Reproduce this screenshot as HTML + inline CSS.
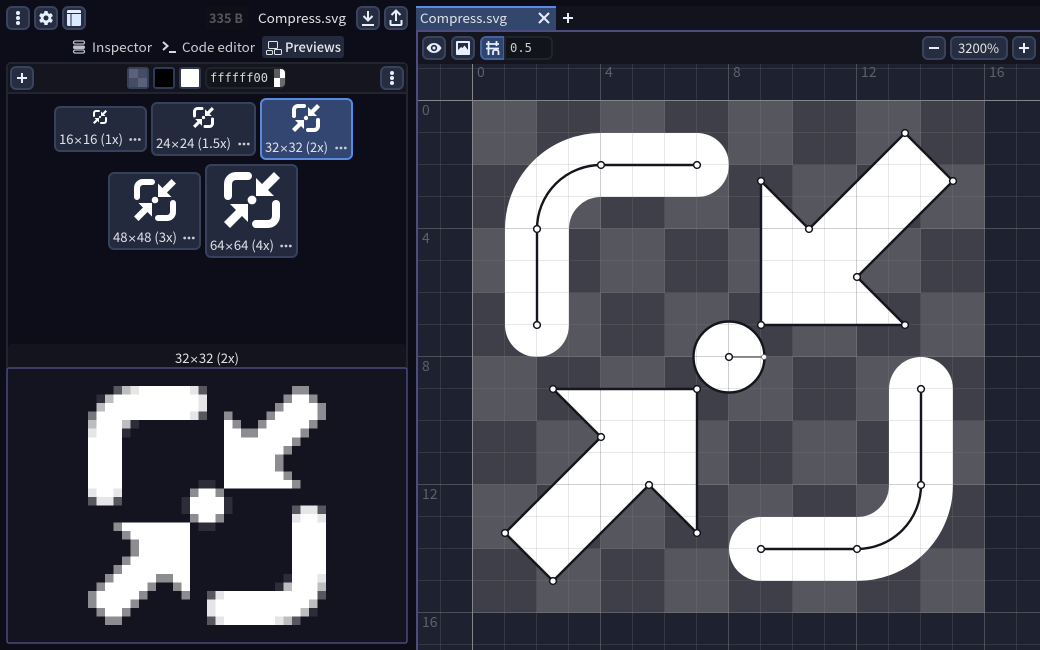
<!DOCTYPE html>
<html>
<head>
<meta charset="utf-8">
<style>
html,body{margin:0;padding:0;background:#0c0d18;width:1040px;height:650px;overflow:hidden}
svg{display:block}
text{font-family:"Noto Sans CJK JP","Liberation Sans",sans-serif;font-size:13px;fill:#dfe1e6}
tspan{font-family:"DejaVu Sans",sans-serif;font-size:11px}
.m{font-family:"DejaVu Sans Mono","Liberation Mono",monospace;font-size:12px}
.r{fill:#5f6068;font-size:14px}
.b{fill:#262d41;stroke:#38435f;stroke-width:2}
.ic{fill:#e6efff}
.is{fill:none;stroke:#e6efff;stroke-width:2}
</style>
</head>
<body>
<svg width="1040" height="650" viewBox="0 0 1040 650" xmlns="http://www.w3.org/2000/svg">
<defs>
<symbol id="cp" viewBox="0 0 16 16">
<path d="M2 7V4a2 2 0 0 1 2-2h3M14 9v3a2 2 0 0 1-2 2H9" fill="none" stroke="#fff" stroke-width="2" stroke-linecap="round"/>
<path d="M9 2.500L10.500 4L13.500 1L15 2.500L12 5.500L13.500 7H9zM7 9v4.500L5.500 12L2.500 15L1 13.500L4 10.500L2.500 9z" fill="#fff"/>
<circle cx="8" cy="8" r="1.100" fill="#fff"/>
</symbol>
<g id="keb"><circle cx="0" cy="-5" r="2" class="ic"/><circle cx="0" cy="0" r="2" class="ic"/><circle cx="0" cy="5" r="2" class="ic"/></g>
<g id="dots"><circle cx="-4.300" cy="0" r="1.400" fill="#c9cbd2"/><circle cx="0" cy="0" r="1.400" fill="#c9cbd2"/><circle cx="4.300" cy="0" r="1.400" fill="#c9cbd2"/></g>
</defs>

<rect width="1040" height="650" fill="#0c0d18"/>

<!-- Left header -->
<rect x="7" y="7" width="22" height="22" rx="5" class="b"/><use href="#keb" x="18" y="18"/>
<rect x="35" y="7" width="22" height="22" rx="5" class="b"/>
<g transform="translate(46 18)" class="ic">
<circle r="5.300"/>
<rect x="-1.800" y="-7" width="3.600" height="14" rx=".8"/>
<rect x="-1.800" y="-7" width="3.600" height="14" rx=".8" transform="rotate(60)"/>
<rect x="-1.800" y="-7" width="3.600" height="14" rx=".8" transform="rotate(120)"/>
<circle r="2.500" fill="#262d41"/>
</g>
<rect x="63" y="7" width="22" height="22" rx="5" class="b"/>
<path d="M67 11.500a1.500 1.500 0 0 1 1.500-1.500h11a1.500 1.500 0 0 1 1.500 1.500V13H67z" fill="#e6efff"/>
<path d="M67 14h3.500v12H68.500a1.500 1.500 0 0 1-1.500-1.500zM71.500 14H81v10.500a1.500 1.500 0 0 1-1.500 1.500h-8z" fill="#dbeaff"/>
<rect x="205" y="6" width="43" height="24" rx="4" fill="#0f1017"/>
<text x="209" y="23" textLength="34" lengthAdjust="spacingAndGlyphs" style="fill:#55565c;font-weight:bold">335 B</text>
<text x="258" y="23" textLength="88" lengthAdjust="spacingAndGlyphs">Compress.svg</text>
<rect x="357" y="7" width="22" height="22" rx="5" class="b"/>
<path d="M368 11v9M363.500 16l4.500 4.500 4.500-4.500M362 25h12" fill="none" stroke="#e6efff" stroke-width="2"/>
<rect x="385" y="7" width="22" height="22" rx="5" class="b"/>
<path d="M396 21v-10M391.500 15l4.500-4.500 4.500 4.500M390.500 20v4a1 1 0 0 0 1 1h9a1 1 0 0 0 1-1v-4" fill="none" stroke="#e6efff" stroke-width="2"/>

<!-- Tabs -->
<g fill="none" stroke="#bcc0c9" stroke-width="1.300"><rect x="73.500" y="41" width="11" height="3" rx="1.500"/><rect x="73.500" y="50" width="11" height="3" rx="1.500"/></g>
<rect x="73" y="45.500" width="12" height="3.500" rx="1.500" fill="#bcc0c9"/>
<text x="92" y="52" textLength="60" lengthAdjust="spacingAndGlyphs" style="fill:#c9cbd0">Inspector</text>
<path d="M163 42l4.500 4-4.500 4" fill="none" stroke="#d5d8de" stroke-width="2"/><rect x="169" y="51" width="7" height="2" fill="#d5d8de"/>
<text x="182" y="52" textLength="73" lengthAdjust="spacingAndGlyphs" style="fill:#c9cbd0">Code editor</text>
<rect x="262" y="36" width="82" height="22" rx="3" fill="#232a3d"/>
<g fill="none" stroke="#dfe3ea" stroke-width="1"><rect x="268.500" y="41.500" width="9" height="7" rx="1"/><rect x="266.500" y="50.500" width="6" height="4" rx="1"/><rect x="274.500" y="49.500" width="7" height="5" rx="1"/></g>
<text x="285" y="52" textLength="56" lengthAdjust="spacingAndGlyphs" style="font-weight:500;fill:#e6e8ec">Previews</text>

<!-- Previews panel -->
<path d="M7 345V67a4 4 0 0 1 4-4h392a4 4 0 0 1 4 4v278" fill="none" stroke="#22242f" stroke-width="2"/>
<path d="M8 93V68a4 4 0 0 1 4-4h390a4 4 0 0 1 4 4v25z" fill="#14151f"/>
<rect x="6" y="92" width="402" height="2" fill="#22242f"/>
<rect x="11" y="67" width="22" height="22" rx="5" class="b"/>
<path d="M22 73v10M17 78h10" stroke="#e6efff" stroke-width="2" fill="none"/>
<rect x="127" y="67" width="22" height="22" rx="3" fill="#36405a"/>
<g fill="#5a6178"><rect x="129" y="69" width="9" height="9"/><rect x="138" y="78" width="9" height="9"/></g>
<g fill="#454d66"><rect x="138" y="69" width="9" height="9"/><rect x="129" y="78" width="9" height="9"/></g>
<rect x="154" y="68" width="20" height="20" rx="2" fill="#000" stroke="#2e3a58" stroke-width="2"/>
<rect x="180" y="68" width="20" height="20" rx="2" fill="#fff" stroke="#2e3a58" stroke-width="2"/>
<rect x="206" y="68" width="79" height="20" rx="5" fill="#12151a" stroke="#1f232c" stroke-width="2"/>
<text x="210" y="82" class="m" textLength="58" lengthAdjust="spacingAndGlyphs" style="fill:#d5d7dc">ffffff00</text>
<path d="M274 69h6v9h-6z" fill="#5a5a5f"/><path d="M280 69h1a4 4 0 0 1 4 4v5h-5z" fill="#fff"/><path d="M274 78h6v9h-6z" fill="#fff"/><path d="M280 78h5v5a4 4 0 0 1-4 4h-1z" fill="#6a6a6f"/>
<rect x="381" y="67" width="22" height="22" rx="5" class="b"/><use href="#keb" x="392" y="78"/>

<!-- Preview tiles -->
<rect x="55" y="107" width="91" height="44" rx="5" fill="#232a3d" stroke="#36415c" stroke-width="2"/>
<use href="#cp" x="92" y="109" width="16" height="16"/>
<text x="59" y="144" textLength="64" lengthAdjust="spacingAndGlyphs">16<tspan>×</tspan>16 (1x)</text><use href="#dots" x="135" y="139.500"/>

<rect x="152" y="103" width="103" height="52" rx="5" fill="#232a3d" stroke="#36415c" stroke-width="2"/>
<use href="#cp" x="191.500" y="105.500" width="24" height="24"/>
<text x="156" y="148" textLength="75" lengthAdjust="spacingAndGlyphs">24<tspan>×</tspan>24 (1.5x)</text><use href="#dots" x="244" y="144"/>

<rect x="261" y="99" width="91" height="60" rx="5" fill="#324671" stroke="#5a8ae0" stroke-width="2"/>
<use href="#cp" x="290" y="102" width="32" height="32"/>
<text x="265" y="152" textLength="63" lengthAdjust="spacingAndGlyphs">32<tspan>×</tspan>32 (2x)</text><use href="#dots" x="341" y="148"/>

<rect x="109" y="173" width="91" height="76" rx="5" fill="#232a3d" stroke="#36415c" stroke-width="2"/>
<use href="#cp" x="131" y="176" width="48" height="48"/>
<text x="113" y="242" textLength="64" lengthAdjust="spacingAndGlyphs">48<tspan>×</tspan>48 (3x)</text><use href="#dots" x="189" y="238"/>

<rect x="206" y="165" width="91" height="92" rx="5" fill="#232a3d" stroke="#36415c" stroke-width="2"/>
<use href="#cp" x="220" y="168" width="64" height="64"/>
<text x="210" y="250" textLength="64" lengthAdjust="spacingAndGlyphs">64<tspan>×</tspan>64 (4x)</text><use href="#dots" x="286" y="246"/>

<!-- Large preview -->
<path d="M8 368V348a4 4 0 0 1 4-4h390a4 4 0 0 1 4 4v20z" fill="#13141e"/>
<rect x="6" y="345" width="2" height="24" fill="#22242f"/><rect x="406" y="345" width="2" height="24" fill="#22242f"/>
<text x="175" y="363" textLength="64" lengthAdjust="spacingAndGlyphs">32<tspan>×</tspan>32 (2x)</text>
<rect x="7" y="368" width="400" height="275" rx="2" fill="#13141f" stroke="#4b4a7c" stroke-width="1.500"/>
<svg x="71" y="369" width="272" height="273" viewBox="0 0 32 32" preserveAspectRatio="none" shape-rendering="crispEdges">
<g fill="none" stroke-width="1">
<path stroke="#fff" d="M8 2.500h6M5 3.500h10M26 3.500h2M4 4.500h11M25 4.500h4M3 5.500h11M24 5.500h5M3 6.500h3M18 6.500h1M23 6.500h5M3 7.500h3M18 7.500h2M22 7.500h5M2 8.500h4M18 8.500h8M2 9.500h4M18 9.500h7M2 10.500h4M18 10.500h6M2 11.500h4M18 11.500h6M2 12.500h4M18 12.500h7M2 13.500h4M18 13.500h8M3 14.500h2M15 14.500h2M14 15.500h4M14 16.500h4M15 17.500h2M27 17.500h2M6 18.500h8M26 18.500h4M7 19.500h7M26 19.500h4M8 20.500h6M26 20.500h4M8 21.500h6M26 21.500h4M7 22.500h7M26 22.500h4M6 23.500h8M26 23.500h4M5 24.500h5M12 24.500h2M26 24.500h3M4 25.500h5M13 25.500h1M26 25.500h3M3 26.500h5M18 26.500h11M3 27.500h4M17 27.500h11M4 28.500h2M17 28.500h10M18 29.500h6"/>
<path stroke="#8c8c91" d="M26 2.500h2M25 3.500h1M28 3.500h1M24 4.500h1M29 4.500h1M18 5.500h1M23 5.500h1M29 5.500h1M19 6.500h1M22 6.500h1M28 6.500h1M20 7.500h2M27 7.500h1M26 8.500h1M25 9.500h1M24 10.500h1M24 11.500h1M25 12.500h1M26 13.500h1M14 14.500h1M17 14.500h1M14 17.500h1M17 17.500h1M5 18.500h1M6 19.500h1M7 20.500h1M7 21.500h1M6 22.500h1M5 23.500h1M4 24.500h1M10 24.500h2M3 25.500h1M9 25.500h1M12 25.500h1M2 26.500h1M8 26.500h1M13 26.500h1M2 27.500h1M7 27.500h1M3 28.500h1M6 28.500h1M4 29.500h2"/>
<path stroke="#e6e6e8" d="M7 2.500h1M14 2.500h1M15 3.500h1M15 4.500h1M14 5.500h1M2 7.500h1M2 14.500h1M5 14.500h1M3 15.500h2M27 16.500h2M26 17.500h1M29 17.500h1M29 24.500h1M17 26.500h1M16 27.500h1M16 28.500h1M17 29.500h1M24 29.500h1"/>
<path stroke="#bdbdbf" d="M6 2.500h1M4 3.500h1M3 4.500h1M2 6.500h1M6 6.500h1M25 25.500h1M29 25.500h1M28 27.500h1M27 28.500h1M25 29.500h1"/>
<path stroke="#56575f" d="M5 2.500h1M15 2.500h1M15 5.500h1M2 15.500h1M5 15.500h1M26 16.500h1M29 16.500h1M16 26.500h1M29 26.500h1M16 29.500h1M26 29.500h1"/>
<path stroke="#77787e" d="M2 5.500h1"/>
<path stroke="#2c2d39" d="M3 3.500h1M7 6.500h1M6 7.500h1M15 13.500h2M13 15.500h1M18 15.500h1M13 16.500h1M18 16.500h1M15 18.500h2M25 24.500h1M24 25.500h1M28 28.500h1"/>
</g>
</svg>

<!-- Right: tab bar -->
<rect x="416" y="6" width="624" height="24" fill="#12131d"/>
<rect x="416" y="6" width="140" height="24" fill="#33466b"/>
<rect x="416" y="6" width="140" height="2" fill="#5a8ae6"/>
<text x="420" y="23" textLength="87" lengthAdjust="spacingAndGlyphs">Compress.svg</text>
<path d="M539 13l10 10M549 13l-10 10" stroke="#e6efff" stroke-width="2" fill="none"/>
<path d="M568 13v10M563 18h10" stroke="#e6efff" stroke-width="2" fill="none"/>

<!-- Toolbar -->
<rect x="416" y="32" width="624" height="32" fill="#14151f"/>
<rect x="416" y="30" width="624" height="2" fill="#4d4c80"/>
<rect x="416" y="30" width="2" height="620" fill="#4d4c80"/>
<rect x="423" y="37" width="22" height="22" rx="5" class="b"/>
<path d="M426.500 48c2-3.500 4.800-5 7.500-5s5.500 1.500 7.500 5c-2 3.500-4.800 5-7.500 5s-5.500-1.500-7.500-5z" fill="#e6efff"/><circle cx="434" cy="48" r="3.200" fill="#262d41"/><circle cx="434" cy="48" r="1.500" fill="#e6efff"/>
<rect x="452" y="37" width="22" height="22" rx="5" class="b"/>
<rect x="456" y="41" width="14" height="14" rx="1" fill="#e6efff"/>
<rect x="458" y="43" width="10" height="7" fill="#262d41"/><path d="M458 50l3-3 1.500 1 2-2.500 3.500 4.500z" fill="#e6efff"/>
<path d="M486 37h18v22h-18a5 5 0 0 1-5-5V42a5 5 0 0 1 5-5z" fill="#2f4470" stroke="#44629c" stroke-width="2"/>
<g fill="none" stroke="#e6efff" stroke-width="1.800"><path d="M488.500 41v14M496.500 41v5M486 44h13M486 48.500h13"/><path d="M493 55v-3a2 2 0 0 1 2-2h1.500a2 2 0 0 1 2 2v3"/></g>
<path d="M505 37h42a5 5 0 0 1 5 5v12a5 5 0 0 1-5 5h-42z" fill="#11141a" stroke="#20242c" stroke-width="2"/>
<text x="510" y="52" class="m" textLength="22" lengthAdjust="spacingAndGlyphs" style="fill:#c9cbd0">0.5</text>
<rect x="923" y="37" width="22" height="22" rx="5" class="b"/><path d="M929 48h10" stroke="#e6efff" stroke-width="2"/>
<rect x="951" y="37" width="56" height="22" rx="5" class="b"/>
<text x="958" y="53" textLength="41" lengthAdjust="spacingAndGlyphs">3200%</text>
<rect x="1013" y="37" width="22" height="22" rx="5" class="b"/><path d="M1024 43v10M1019 48h10" stroke="#e6efff" stroke-width="2" fill="none"/>

<!-- Canvas -->
<svg x="418" y="64" width="622" height="586" viewBox="418 64 622 586">
<rect x="418" y="64" width="622" height="586" fill="#1e2130"/>
<path fill="#55565e" d="M473 101h64v64h-64zM601 101h64v64h-64zM729 101h64v64h-64zM857 101h64v64h-64zM537 165h64v64h-64zM665 165h64v64h-64zM793 165h64v64h-64zM921 165h64v64h-64zM473 229h64v64h-64zM601 229h64v64h-64zM729 229h64v64h-64zM857 229h64v64h-64zM537 293h64v64h-64zM665 293h64v64h-64zM793 293h64v64h-64zM921 293h64v64h-64zM473 357h64v64h-64zM601 357h64v64h-64zM729 357h64v64h-64zM857 357h64v64h-64zM537 421h64v64h-64zM665 421h64v64h-64zM793 421h64v64h-64zM921 421h64v64h-64zM473 485h64v64h-64zM601 485h64v64h-64zM729 485h64v64h-64zM857 485h64v64h-64zM537 549h64v64h-64zM665 549h64v64h-64zM793 549h64v64h-64zM921 549h64v64h-64z"/>
<path fill="#3e3f49" d="M537 101h64v64h-64zM665 101h64v64h-64zM793 101h64v64h-64zM921 101h64v64h-64zM473 165h64v64h-64zM601 165h64v64h-64zM729 165h64v64h-64zM857 165h64v64h-64zM537 229h64v64h-64zM665 229h64v64h-64zM793 229h64v64h-64zM921 229h64v64h-64zM473 293h64v64h-64zM601 293h64v64h-64zM729 293h64v64h-64zM857 293h64v64h-64zM537 357h64v64h-64zM665 357h64v64h-64zM793 357h64v64h-64zM921 357h64v64h-64zM473 421h64v64h-64zM601 421h64v64h-64zM729 421h64v64h-64zM857 421h64v64h-64zM537 485h64v64h-64zM665 485h64v64h-64zM793 485h64v64h-64zM921 485h64v64h-64zM473 549h64v64h-64zM601 549h64v64h-64zM729 549h64v64h-64zM857 549h64v64h-64z"/>

<!-- Icon fill -->
<g transform="translate(473 101) scale(32)">
<path d="M2 7V4a2 2 0 0 1 2-2h3M14 9v3a2 2 0 0 1-2 2H9" fill="none" stroke="#fff" stroke-width="2" stroke-linecap="round"/>
<path d="M9 2.500L10.500 4L13.500 1L15 2.500L12 5.500L13.500 7H9zM7 9v4.500L5.500 12L2.500 15L1 13.500L4 10.500L2.500 9z" fill="#fff"/>
<circle cx="8" cy="8" r="1.110" fill="#fff"/>
</g>

<!-- Grid -->
<g stroke="#8a8a8e" stroke-width="1" stroke-opacity=".2" fill="none">
<path d="M440.500 64V650M504.500 64V650M536.500 64V650M568.500 64V650M632.500 64V650M664.500 64V650M696.500 64V650M760.500 64V650M792.500 64V650M824.500 64V650M888.500 64V650M920.500 64V650M952.500 64V650M1016.500 64V650"/>
<path d="M418 68.500H1040M418 132.500H1040M418 164.500H1040M418 196.500H1040M418 260.500H1040M418 292.500H1040M418 324.500H1040M418 388.500H1040M418 420.500H1040M418 452.500H1040M418 516.500H1040M418 548.500H1040M418 580.500H1040M418 644.500H1040"/>
</g>
<g stroke="#8a8a8e" stroke-width="1" stroke-opacity=".42" fill="none">
<path d="M600.500 64V650M728.500 64V650M856.500 64V650M984.500 64V650"/>
<path d="M418 228.500H1040M418 356.500H1040M418 484.500H1040M418 612.500H1040"/>
</g>
<path d="M472.500 64V650M418 100.500H1040" stroke="#85858a" stroke-width="1" fill="none"/>

<!-- Outlines -->
<g fill="none" stroke="#15161d" stroke-width="2.400" stroke-linejoin="round">
<path d="M537 325V229a64 64 0 0 1 64-64h96"/>
<path d="M921 389V485a64 64 0 0 1-64 64h-96"/>
<path d="M761 181L809 229L905 133L953 181L857 277L905 325H761Z"/>
<path d="M697 389V533L649 485L553 581L505 533L601 437L553 389Z"/>
<circle cx="729" cy="357" r="35.500"/>
</g>
<path d="M729 357H765" stroke="#6a6a70" stroke-width="1.500"/>
<g fill="#fff" stroke="#15161d" stroke-width="1.500">
<circle cx="537" cy="325" r="3.400"/><circle cx="537" cy="229" r="3.400"/><circle cx="601" cy="165" r="3.400"/><circle cx="697" cy="165" r="3.400"/>
<circle cx="921" cy="389" r="3.400"/><circle cx="921" cy="485" r="3.400"/><circle cx="857" cy="549" r="3.400"/><circle cx="761" cy="549" r="3.400"/>
<circle cx="761" cy="181" r="3.400"/><circle cx="809" cy="229" r="3.400"/><circle cx="905" cy="133" r="3.400"/><circle cx="953" cy="181" r="3.400"/><circle cx="857" cy="277" r="3.400"/><circle cx="905" cy="325" r="3.400"/><circle cx="761" cy="325" r="3.400"/>
<circle cx="697" cy="389" r="3.400"/><circle cx="697" cy="533" r="3.400"/><circle cx="649" cy="485" r="3.400"/><circle cx="553" cy="581" r="3.400"/><circle cx="505" cy="533" r="3.400"/><circle cx="601" cy="437" r="3.400"/><circle cx="553" cy="389" r="3.400"/>
<circle cx="729" cy="357" r="3.400"/>
</g>
<circle cx="764" cy="357" r="2.500" fill="#fff" stroke="#6a6a70" stroke-width=".8"/>

<!-- Rulers -->
<text class="r" x="477" y="77">0</text><text class="r" x="605" y="77">4</text><text class="r" x="733" y="77">8</text><text class="r" x="861" y="77">12</text><text class="r" x="989" y="77">16</text>
<text class="r" x="422" y="115">0</text><text class="r" x="422" y="243">4</text><text class="r" x="422" y="371">8</text><text class="r" x="422" y="499">12</text><text class="r" x="422" y="627">16</text>
</svg>
<rect x="416" y="64" width="2" height="586" fill="#4d4c80"/>
</svg>
</body>
</html>
